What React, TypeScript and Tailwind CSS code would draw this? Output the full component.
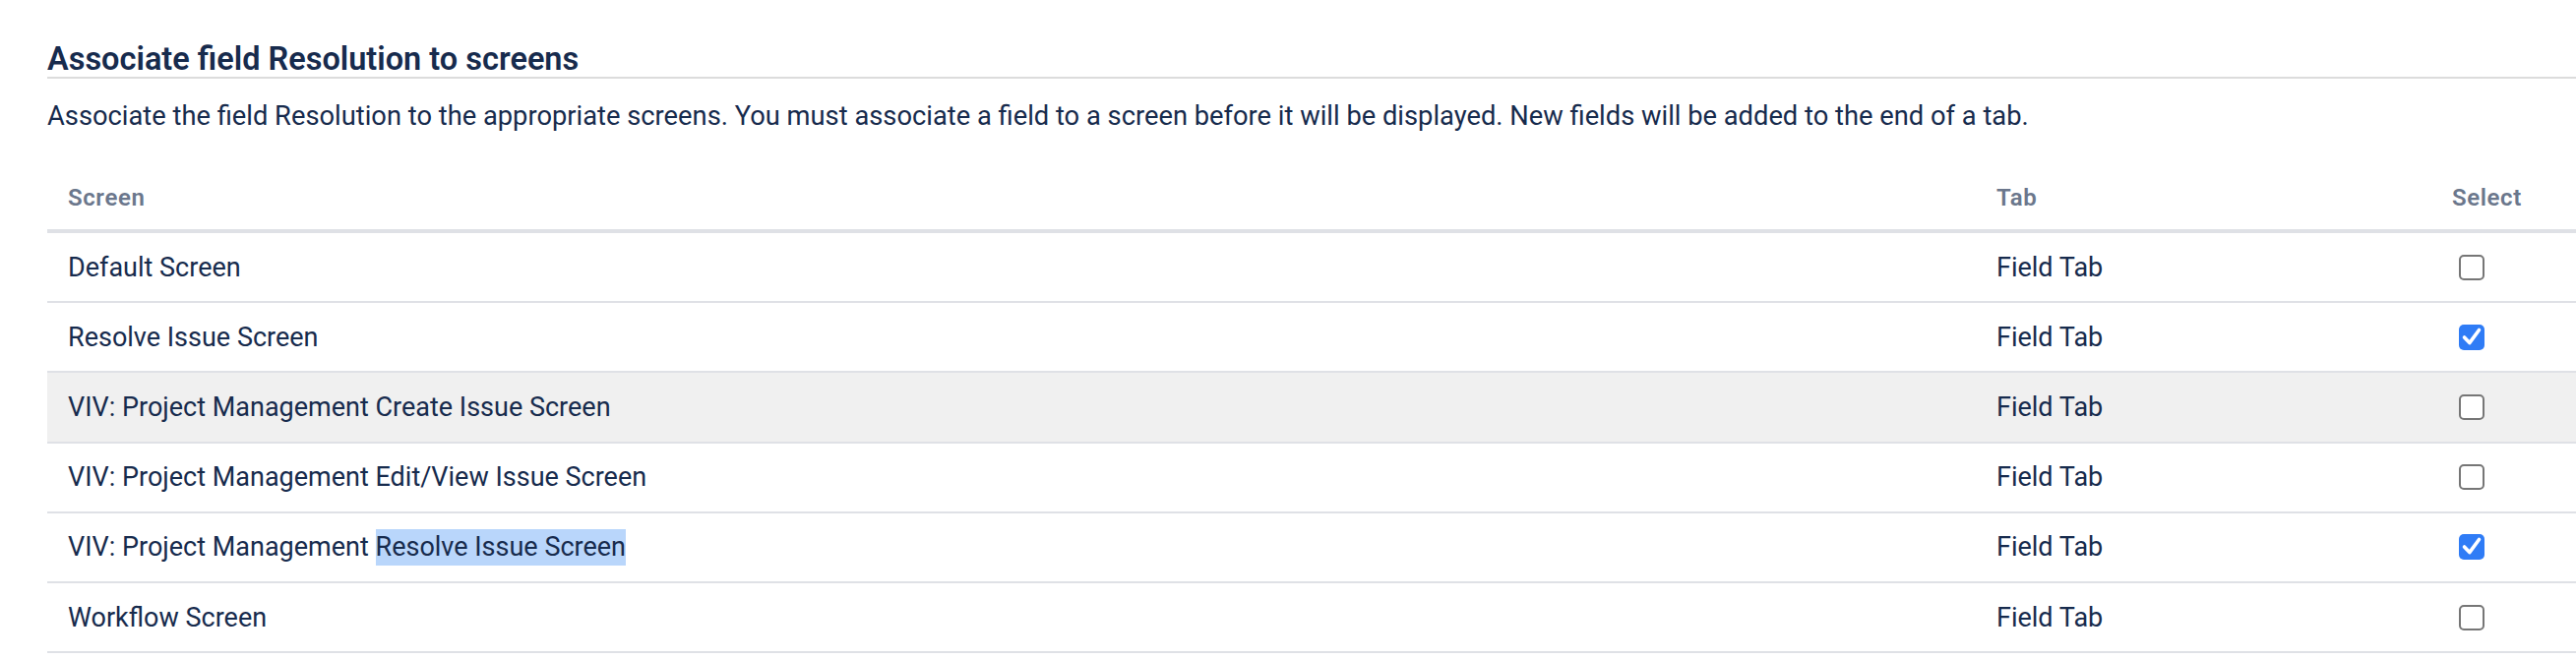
import React from "react";

type Row = { name: React.ReactNode; checked: boolean; hover?: boolean };

function Checkbox({ checked }: { checked: boolean }) {
  if (checked) {
    return (
      <div className="ml-[7px] flex h-[26px] w-[26px] items-center justify-center rounded-[5px] bg-[#2f7cf6]">
        <svg viewBox="0 0 26 26" className="h-[26px] w-[26px]">
          <path
            d="M5.5 13 L10.8 18.6 L20.5 5.5"
            fill="none"
            stroke="#ffffff"
            strokeWidth="3.6"
            strokeLinecap="round"
            strokeLinejoin="round"
          />
        </svg>
      </div>
    );
  }
  return (
    <div className="ml-[7px] h-[26px] w-[26px] rounded-[5px] border-2 border-[#767676] bg-white" />
  );
}

export default function App() {
  const rows: Row[] = [
    { name: "Default Screen", checked: false },
    { name: "Resolve Issue Screen", checked: true },
    { name: "VIV: Project Management Create Issue Screen", checked: false, hover: true },
    { name: "VIV: Project Management Edit/View Issue Screen", checked: false },
    {
      name: (
        <>
          VIV: Project Management{" "}
          <span className="inline-block bg-[#b9d6fb] leading-[37px]">Resolve Issue Screen</span>
        </>
      ),
      checked: true,
    },
    { name: "Workflow Screen", checked: false },
  ];

  return (
    <div className="min-h-[670px] w-full overflow-hidden bg-white pl-[48px] pt-[42px] text-[#172b4d] [font-family:Roboto,'Liberation_Sans',sans-serif]">
      <h2 className="border-b-2 border-[#dcdcdc] text-[32.5px] font-semibold leading-[36px]">
        Associate field Resolution to screens
      </h2>
      <p className="mt-[18px] whitespace-nowrap text-[27.3px] leading-[40px]">
        Associate the field Resolution to the appropriate screens. You must associate a field to a screen before it will be displayed. New fields will be added to the end of a tab.
      </p>
      <div className="mt-[30px]">
        <div className="grid h-[69px] grid-cols-[1961px_463px_1fr] items-center border-b-4 border-[#dfe1e6] text-[24px] font-semibold leading-[32px] tracking-[0.6px] text-[#6b778c]">
          <div className="pl-[21px]">Screen</div>
          <div className="pl-[20px]">Tab</div>
          <div className="pl-[20px]">Select</div>
        </div>
        {rows.map((r, i) => (
          <div
            key={i}
            className={
              "grid h-[71.2px] grid-cols-[1961px_463px_1fr] items-center border-b-2 border-[#dfe1e6] text-[27px] leading-[40px] " +
              (r.hover ? "bg-[#f0f0f0]" : "bg-white")
            }
          >
            <div className="whitespace-nowrap pl-[21px]">{r.name}</div>
            <div className="pl-[20px]">Field Tab</div>
            <div className="flex items-center pl-[20px]">
              <Checkbox checked={r.checked} />
            </div>
          </div>
        ))}
      </div>
    </div>
  );
}
